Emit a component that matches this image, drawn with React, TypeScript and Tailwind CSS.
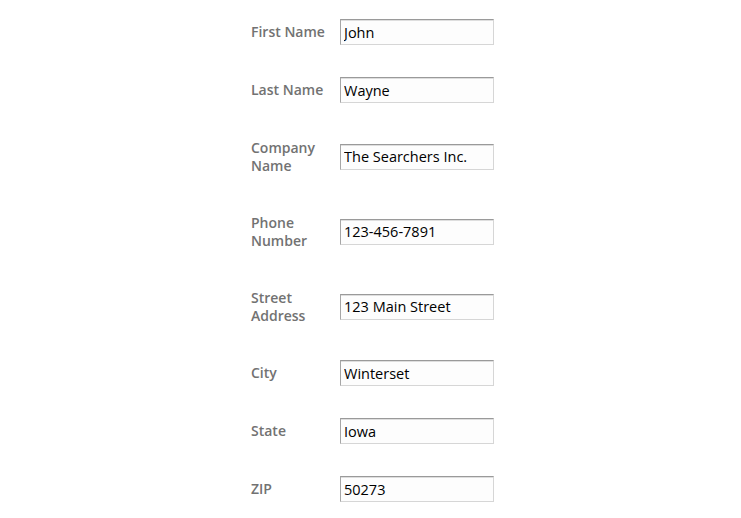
import React from 'react';

const FIELDS = [
  { label: 'First Name', value: 'John' },
  { label: 'Last Name', value: 'Wayne' },
  { label: 'Company Name', value: 'The Searchers Inc.' },
  { label: 'Phone Number', value: '123-456-7891' },
  { label: 'Street Address', value: '123 Main Street' },
  { label: 'City', value: 'Winterset' },
  { label: 'State', value: 'Iowa' },
  { label: 'ZIP', value: '50273' },
];

const App: React.FC = () => {
  return (
    <div className="h-screen overflow-hidden bg-white font-['Open_Sans',sans-serif]">
      <form className="mx-auto w-[247px] pl-[4px] pt-[3px]">
        {FIELDS.map((f) => (
          <div key={f.label} className="flex min-h-[58px] items-center">
            <label className="w-[89px] shrink-0 py-5 pr-[8px] text-[14px] font-semibold leading-[17.5px] text-[#727272]">
              {f.label}
            </label>
            <input
              type="text"
              defaultValue={f.value}
              className="h-[26px] w-[154px] border border-[#d6d6d6] border-t-[#9a9a9a] border-l-[#a6a6a6] bg-[#fdfdfd] pl-[3px] text-[14.5px] text-black shadow-[inset_0_1px_0_#dedede] outline-none"
            />
          </div>
        ))}
      </form>
    </div>
  );
};

export default App;
